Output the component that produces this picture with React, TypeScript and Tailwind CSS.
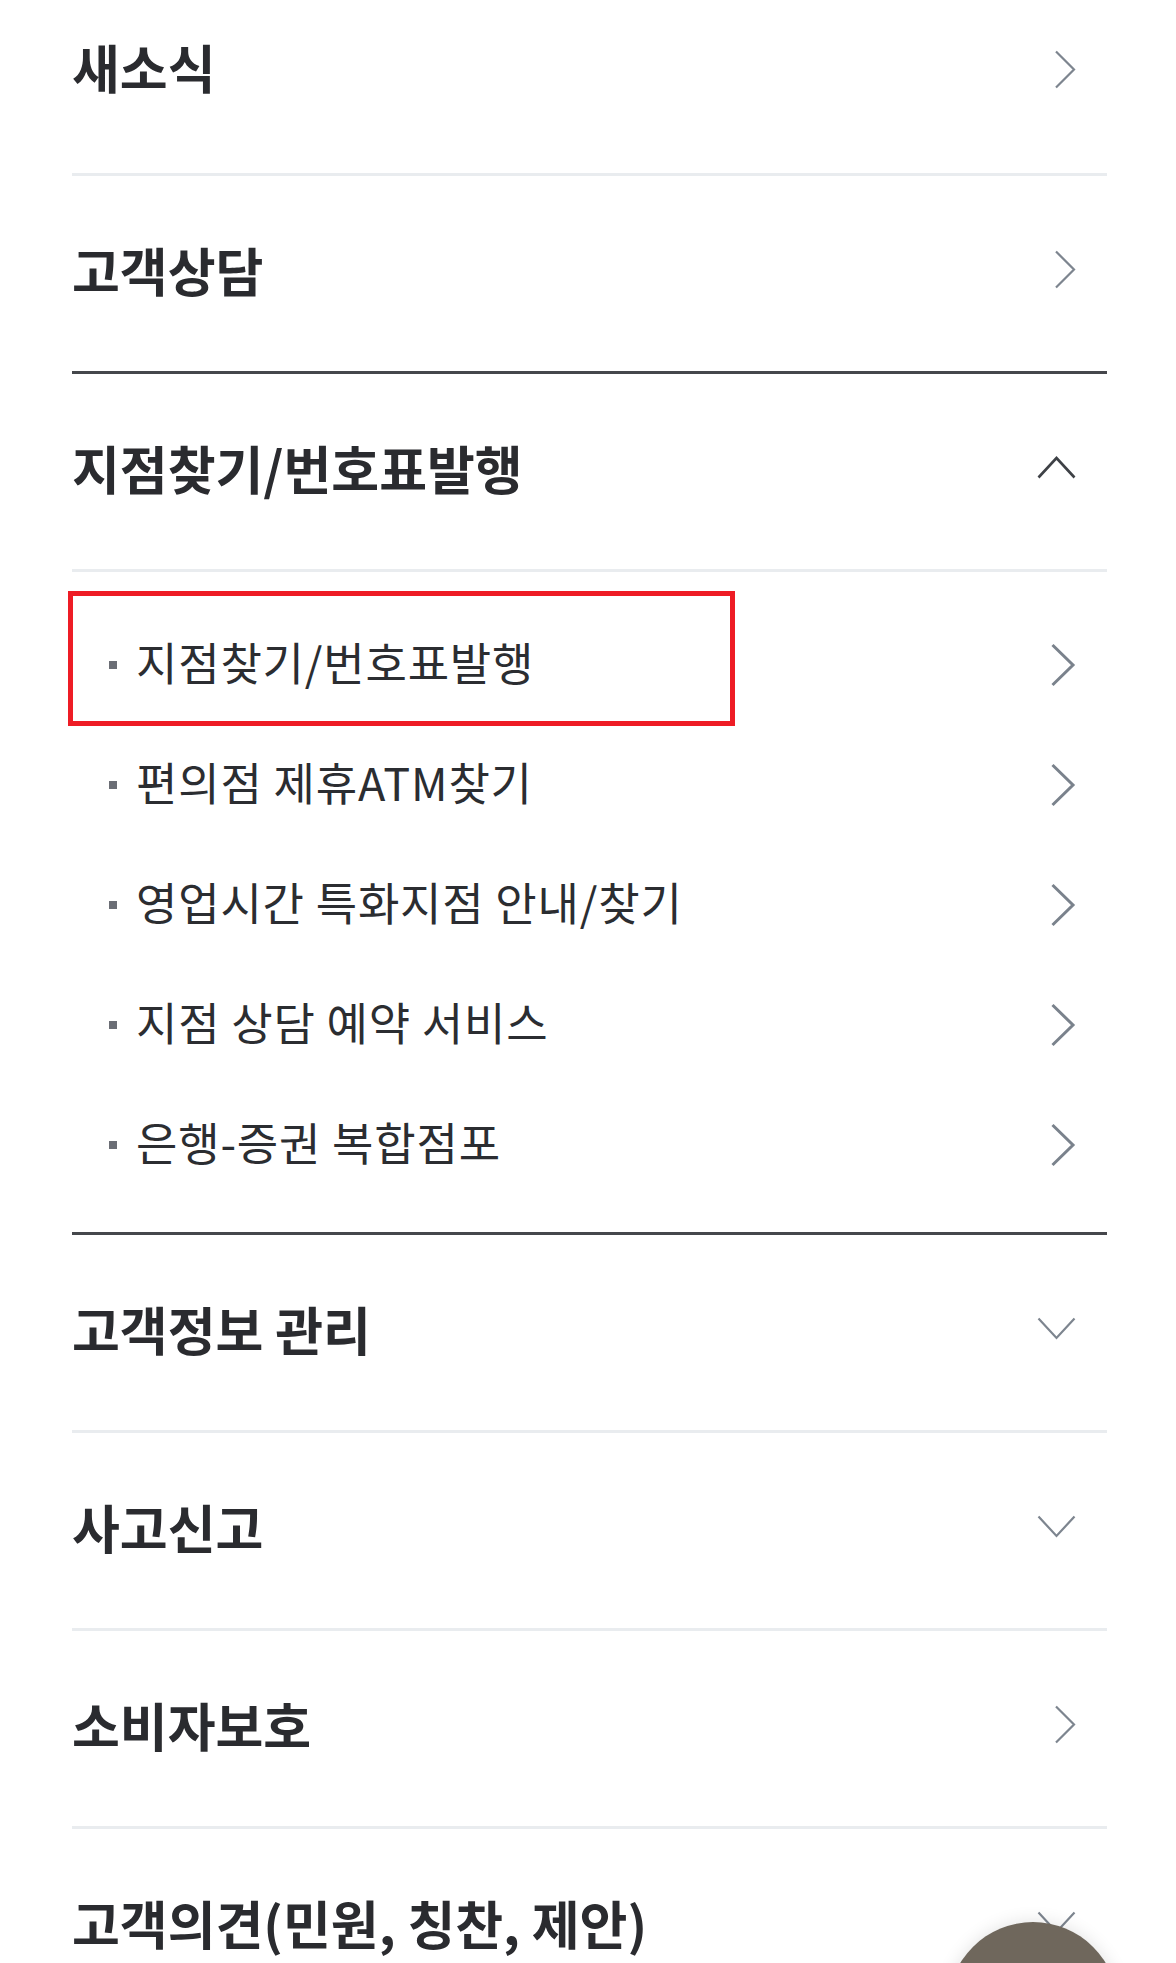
import React from "react";

type Icon = "right" | "up" | "down";

const Chevron = ({ dir }: { dir: Icon }) => {
  if (dir === "right")
    return (
      <svg width="22" height="39" viewBox="0 0 22 39" className="shrink-0">
        <polyline points="2,1.5 20,19.5 2,37.5" fill="none" stroke="#7d858f" strokeWidth="2.2" />
      </svg>
    );
  if (dir === "up")
    return (
      <svg width="39" height="23" viewBox="0 0 39 23" className="shrink-0">
        <polyline points="1.5,21.5 19.5,2 37.5,21.5" fill="none" stroke="#3e4146" strokeWidth="2.6" />
      </svg>
    );
  return (
    <svg width="39" height="23" viewBox="0 0 39 23" className="shrink-0">
      <polyline points="1.5,1.5 19.5,21 37.5,1.5" fill="none" stroke="#7d858f" strokeWidth="2.2" />
    </svg>
  );
};

const SubChevron = () => (
  <svg width="26" height="44" viewBox="0 0 26 44" className="shrink-0">
    <polyline points="2.5,2 23,22 2.5,42" fill="none" stroke="#7a828c" strokeWidth="3" />
  </svg>
);

const subItems = [
  "지점찾기/번호표발행",
  "편의점 제휴ATM찾기",
  "영업시간 특화지점 안내/찾기",
  "지점 상담 예약 서비스",
  "은행-증권 복합점포",
];

const Heading = ({
  title,
  icon,
  dark,
  first,
}: {
  title: string;
  icon: Icon;
  dark?: boolean;
  first?: boolean;
}) => (
  <div
    className={`flex h-[198px] items-center justify-between border-b-[3px] pr-[31px] ${
      first ? "pb-[12px]" : "pb-[8px]"
    } ${dark ? "border-[#45474c]" : "border-[#e9ecef]"}`}
  >
    <span
      className={`text-[52px] font-bold leading-none tracking-[0px] text-[#2a2b2f] ${
        first ? "mb-[6px]" : ""
      }`}
    >
      {title}
    </span>
    <Chevron dir={icon} />
  </div>
);

export default function App() {
  return (
    <div
      className="relative h-[1963px] w-[1176px] overflow-hidden bg-white"
      style={{ fontFamily: '"Noto Sans CJK KR", "Noto Sans", sans-serif' }}
    >
      <div className="mt-[-22px] pl-[72px] pr-[69px]">
        <Heading title="새소식" icon="right" first />
        <Heading title="고객상담" icon="right" dark />
        <Heading title="지점찾기/번호표발행" icon="up" />

        <div className="border-b-[3px] border-[#45474c] pb-[27px] pt-[33px]">
          {subItems.map((item, i) => (
            <div key={item} className="relative flex h-[120px] items-center justify-between pr-[31px]">
              <div className="flex items-center">
                <span className="ml-[37px] h-[8px] w-[8px] bg-[#6b6e75]" />
                <span className="mb-[8px] ml-[19px] text-[45px] font-normal leading-none tracking-[0.8px] text-[#2b2d31]">
                  {item}
                </span>
              </div>
              <SubChevron />
              {i === 0 && (
                <div className="pointer-events-none absolute left-[-4px] top-[-14px] h-[135px] w-[667px] border-[5px] border-[#ee1c25]" />
              )}
            </div>
          ))}
        </div>

        <Heading title="고객정보 관리" icon="down" />
        <Heading title="사고신고" icon="down" />
        <Heading title="소비자보호" icon="right" />
        <Heading title="고객의견(민원, 칭찬, 제안)" icon="down" />
      </div>

      <div className="absolute left-[948px] top-[1922px] h-[170px] w-[170px] rounded-full bg-[#6f675c] shadow-[0_0_18px_rgba(0,0,0,0.12)]" />
    </div>
  );
}
